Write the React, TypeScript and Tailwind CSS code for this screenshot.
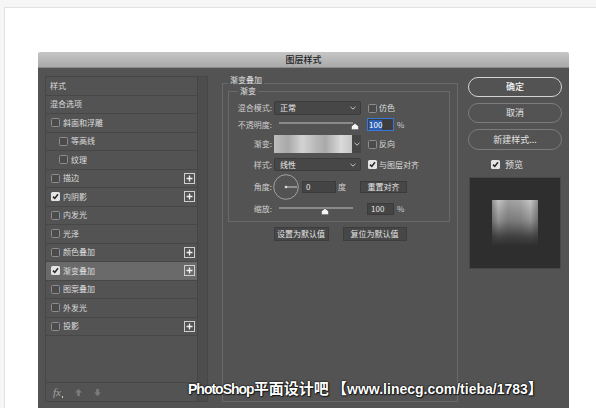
import React from 'react';

const Box = ({ checked }: { checked?: boolean }) =>
  checked ? (
    <span className="flex h-[9px] w-[9px] shrink-0 items-center justify-center rounded-[1.5px] bg-[#e4e4e4]">
      <svg width="7" height="7" viewBox="0 0 7 7">
        <path d="M1 3.6 L2.8 5.4 L6 1.3" fill="none" stroke="#262626" strokeWidth="1.5" />
      </svg>
    </span>
  ) : (
    <span className="block h-[9px] w-[9px] shrink-0 rounded-[1.5px] border border-[#8d8d8d] bg-[#4b4b4b]" />
  );

const Plus = () => (
  <span className="flex h-[11px] w-[11px] shrink-0 items-center justify-center border border-[#cfcfcf]">
    <svg width="7" height="7" viewBox="0 0 7 7">
      <path d="M3.5 0.5V6.5M0.5 3.5H6.5" stroke="#f0f0f0" strokeWidth="1.3" />
    </svg>
  </span>
);

const Chevron = () => (
  <svg width="6" height="4" viewBox="0 0 6 4">
    <path d="M0.5 0.8 L3 3.2 L5.5 0.8" fill="none" stroke="#c8c8c8" strokeWidth="1" />
  </svg>
);

const Thumb = () => (
  <svg width="8" height="7" viewBox="0 0 8 7">
    <polygon points="4,0.3 7.6,3.2 7.6,6.7 0.4,6.7 0.4,3.2" fill="#f4f4f4" stroke="#3a3a3a" strokeWidth="0.6" />
  </svg>
);

const Label = ({ children }: { children: React.ReactNode }) => (
  <span className="w-[43px] shrink-0 self-center text-right leading-[10px] text-[#cfcfcf]">{children}</span>
);

type Row = { t: string; cb?: boolean | null; indent?: boolean; plus?: boolean; sel?: boolean };

const rows: Row[] = [
  { t: '样式', cb: null },
  { t: '混合选项', cb: null },
  { t: '斜面和浮雕', cb: false },
  { t: '等高线', cb: false, indent: true },
  { t: '纹理', cb: false, indent: true },
  { t: '描边', cb: false, plus: true },
  { t: '内阴影', cb: true, plus: true },
  { t: '内发光', cb: false },
  { t: '光泽', cb: false },
  { t: '颜色叠加', cb: false, plus: true },
  { t: '渐变叠加', cb: true, plus: true, sel: true },
  { t: '图案叠加', cb: false },
  { t: '外发光', cb: false },
  { t: '投影', cb: false, plus: true },
];

const Arrow = ({ down }: { down?: boolean }) => (
  <svg width="7" height="7" viewBox="0 0 7 7" className={down ? 'rotate-180' : ''}>
    <polygon points="3.5,0 7,3.6 4.8,3.6 4.8,7 2.2,7 2.2,3.6 0,3.6" fill="#7c7c7c" />
  </svg>
);

function LeftPanel() {
  return (
    <div className="flex h-[326px] w-[163px] shrink-0 border border-[#474747]">
      <div className="flex w-[151px] flex-col">
        {rows.map((r) => (
          <div
            key={r.t}
            className={`flex h-[18.5px] shrink-0 items-center border-b border-[#474747] pr-[2px] ${
              r.sel ? 'bg-[#6a6a6a]' : ''
            } ${r.cb === null ? 'pl-[4px]' : r.indent ? 'pl-[13px]' : 'pl-[5px]'}`}
          >
            {r.cb !== null && <Box checked={!!r.cb} />}
            <span className={`${r.cb !== null ? 'ml-[3px]' : ''} flex-1 leading-[10px] text-[#dedede]`}>{r.t}</span>
            {r.plus && <Plus />}
          </div>
        ))}
        <div className="flex-1" />
        <div className="flex h-[19px] items-center border-t border-[#474747] pl-[7px]">
          <span className="relative font-[family-name:'Liberation_Serif',serif] text-[11px] italic leading-[11px] text-[#a4a4a4]">
            fx
          </span>
          <span className="ml-[1px] mt-[10px] block h-[1.5px] w-[1.5px] bg-[#cfcfcf]" />
          <span className="ml-[12px] flex"><Arrow /></span>
          <span className="ml-[12px] flex"><Arrow down /></span>
        </div>
      </div>
      <div className="flex-1 border-l border-[#444] bg-[#4d4d4d]" />
    </div>
  );
}

function Slider({ pos }: { pos: number }) {
  return (
    <div className="relative ml-[7px] mt-[4px] h-[9px] w-[74px] shrink-0">
      <div className="h-[1.5px] bg-[#8a8a8a]" />
      <div className="absolute top-[0.5px]" style={{ left: pos }}>
        <Thumb />
      </div>
    </div>
  );
}

function MiddlePanel() {
  return (
    <fieldset className="ml-[14px] -mt-[1px] h-[327px] w-[236px] shrink-0 border border-[#696969]">
      <legend className="ml-[5px] px-[2px] pb-[6px] leading-[10px] text-[#e2e2e2]">渐变叠加</legend>
      <fieldset className="mx-[5px] -mt-[5px] w-[222px] border border-[#696969] pb-[6px]">
        <legend className="ml-[9px] px-[2px] leading-[10px] text-[#e2e2e2]">渐变</legend>

        <div className="mt-[5px] flex h-[14px] items-center">
          <Label>混合模式:</Label>
          <div className="ml-[2px] flex h-[14px] w-[87px] items-center justify-between rounded-[2px] border border-[#3c3c3c] bg-[#474747] pl-[5px] pr-[4px] leading-[10px] text-[#ececec]">
            正常
            <Chevron />
          </div>
          <div className="ml-[7px] flex items-center gap-[2px]">
            <Box />
            <span className="leading-[10px] text-[#dcdcdc]">仿色</span>
          </div>
        </div>

        <div className="mt-[3px] flex h-[13px] items-start">
          <Label>不透明度:</Label>
          <Slider pos={72} />
          <div className="ml-[14px] flex h-[13px] w-[27px] shrink-0 items-center border border-[#3a78d6] bg-[#3d3d3d] pl-[1px]">
            <span className="bg-[#2b5fb4] leading-[10px] text-white">100</span>
          </div>
          <span className="ml-[3px] self-center leading-[10px] text-[#cfcfcf]">%</span>
        </div>

        <div className="mt-[4px] flex h-[18px] items-center">
          <Label>渐变:</Label>
          <div className="ml-[2px] h-[18px] w-[78px] bg-[linear-gradient(90deg,#bdbdbd_0%,#a8a8a8_18%,#d3d3d3_36%,#b6b6b6_55%,#aaaaaa_66%,#dadada_86%,#c6c6c6_100%)]" />
          <div className="flex h-[18px] w-[9px] items-center justify-center bg-[#464646]">
            <Chevron />
          </div>
          <div className="ml-[7px] flex items-center gap-[2px]">
            <Box />
            <span className="leading-[10px] text-[#dcdcdc]">反向</span>
          </div>
        </div>

        <div className="mt-[5px] flex h-[13px] items-center">
          <Label>样式:</Label>
          <div className="ml-[2px] flex h-[13px] w-[87px] items-center justify-between rounded-[2px] border border-[#3c3c3c] bg-[#474747] pl-[5px] pr-[4px] leading-[10px] text-[#ececec]">
            线性
            <Chevron />
          </div>
          <div className="ml-[7px] flex items-center gap-[2px]">
            <Box checked />
            <span className="leading-[10px] text-[#dcdcdc]">与图层对齐</span>
          </div>
        </div>

        <div className="mt-[3px] flex h-[26px] items-center">
          <Label>角度:</Label>
          <svg width="26" height="26" viewBox="0 0 26 26" className="ml-[1px] shrink-0">
            <circle cx="13" cy="13" r="12.3" fill="none" stroke="#a2a2a2" strokeWidth="1" />
            <line x1="13" y1="13" x2="24" y2="13" stroke="#cfcfcf" strokeWidth="1" />
            <circle cx="13" cy="13" r="1.3" fill="#dcdcdc" />
          </svg>
          <div className="ml-[3px] flex h-[12px] w-[34px] shrink-0 items-center border border-[#3b3b3b] bg-[#444] pl-[3px] leading-[10px] text-[#e6e6e6]">
            0
          </div>
          <span className="ml-[2px] w-[22px] leading-[10px] text-[#cfcfcf]">度</span>
          <div className="flex h-[12px] w-[47px] items-center justify-center border border-[#3b3b3b] bg-[#474747] leading-[10px] text-[#e6e6e6]">
            重置对齐
          </div>
        </div>

        <div className="mt-[3px] flex h-[12px] items-start">
          <Label>缩放:</Label>
          <Slider pos={41.5} />
          <div className="ml-[14px] flex h-[12px] w-[27px] shrink-0 items-center border border-[#3b3b3b] bg-[#444] pl-[3px] leading-[10px] text-[#e6e6e6]">
            100
          </div>
          <span className="ml-[3px] self-center leading-[10px] text-[#cfcfcf]">%</span>
        </div>
      </fieldset>

      <div className="mt-[5px] flex justify-center gap-[14px]">
        <div className="flex h-[14px] w-[55px] items-center justify-center border border-[#3d3d3d] bg-[#474747] leading-[10px] text-[#e6e6e6]">
          设置为默认值
        </div>
        <div className="flex h-[14px] w-[64px] items-center justify-center border border-[#3d3d3d] bg-[#474747] leading-[10px] text-[#e6e6e6]">
          复位为默认值
        </div>
      </div>
    </fieldset>
  );
}

function RightPanel() {
  return (
    <div className="ml-[10px] mt-[1px] flex w-[94px] shrink-0 flex-col text-[9px]">
      <div className="flex h-[20px] items-center justify-center rounded-full border border-[#d4d4d4] font-medium text-[#f4f4f4]">
        确定
      </div>
      <div className="mt-[6px] flex h-[20px] items-center justify-center rounded-full border border-[#7c7c7c] text-[#e2e2e2]">
        取消
      </div>
      <div className="mt-[6px] flex h-[21px] items-center justify-center rounded-full border border-[#7c7c7c] text-[#e2e2e2]">
        新建样式...
      </div>
      <div className="mt-[10px] flex h-[9px] items-center gap-[5px] pl-[23px]">
        <Box checked />
        <span className="leading-[10px] text-[#e2e2e2]">预览</span>
      </div>
      <div className="ml-[1px] mt-[8px] flex h-[92px] w-[92px] items-center justify-center border border-[#474747] bg-[#2e2e2e]">
        <div className="h-[46px] w-[46px] bg-[linear-gradient(180deg,rgba(46,46,46,0)_0%,rgba(46,46,46,0.35)_45%,rgba(46,46,46,0.85)_80%,#2e2e2e_100%),linear-gradient(90deg,#8e8e8e_0%,#c2c2c2_14%,#a0a0a0_35%,#a8a8a8_62%,#c6c6c6_84%,#8e8e8e_100%)]" />
      </div>
    </div>
  );
}

export default function App() {
  return (
    <div className="relative h-[408px] w-[596px] overflow-hidden bg-[#f6f6f6] pl-[4px] pt-[7px] font-[family-name:'Noto_Sans_CJK_SC','Noto_Sans',sans-serif] text-[8px]">
      <div className="h-full border-l border-t border-[#e2e2e2] bg-white pl-[33px] pt-[44px]">
        <div className="flex h-[356px] w-[531px] flex-col overflow-hidden rounded-t-[2px]">
          <div className="flex h-[16px] shrink-0 items-center justify-center border-b border-[#8a8a8a] bg-[linear-gradient(180deg,#c6c6c6,#a9a9a9)] text-[9px] font-medium text-[#1e1e1e]">
            图层样式
          </div>
          <div className="flex flex-1 items-start bg-[#535353] pb-[6px] pl-[7px] pt-[8px]">
            <LeftPanel />
            <MiddlePanel />
            <RightPanel />
          </div>
        </div>
      </div>
      <div className="absolute left-[188px] top-[378px] whitespace-nowrap text-[15px] font-bold leading-[20px] text-white [text-shadow:0_0_2px_#000,0_0_1px_#000,1px_1px_1px_#222]">
        <span className="font-[family-name:'Liberation_Sans',sans-serif] text-[14px] tracking-[-1px]">PhotoShop</span>
        <span>平面设计吧 【</span>
        <span className="font-[family-name:'Liberation_Sans',sans-serif] text-[14px]">www.linecg.com/tieba/1783</span>
        <span>】</span>
      </div>
    </div>
  );
}
